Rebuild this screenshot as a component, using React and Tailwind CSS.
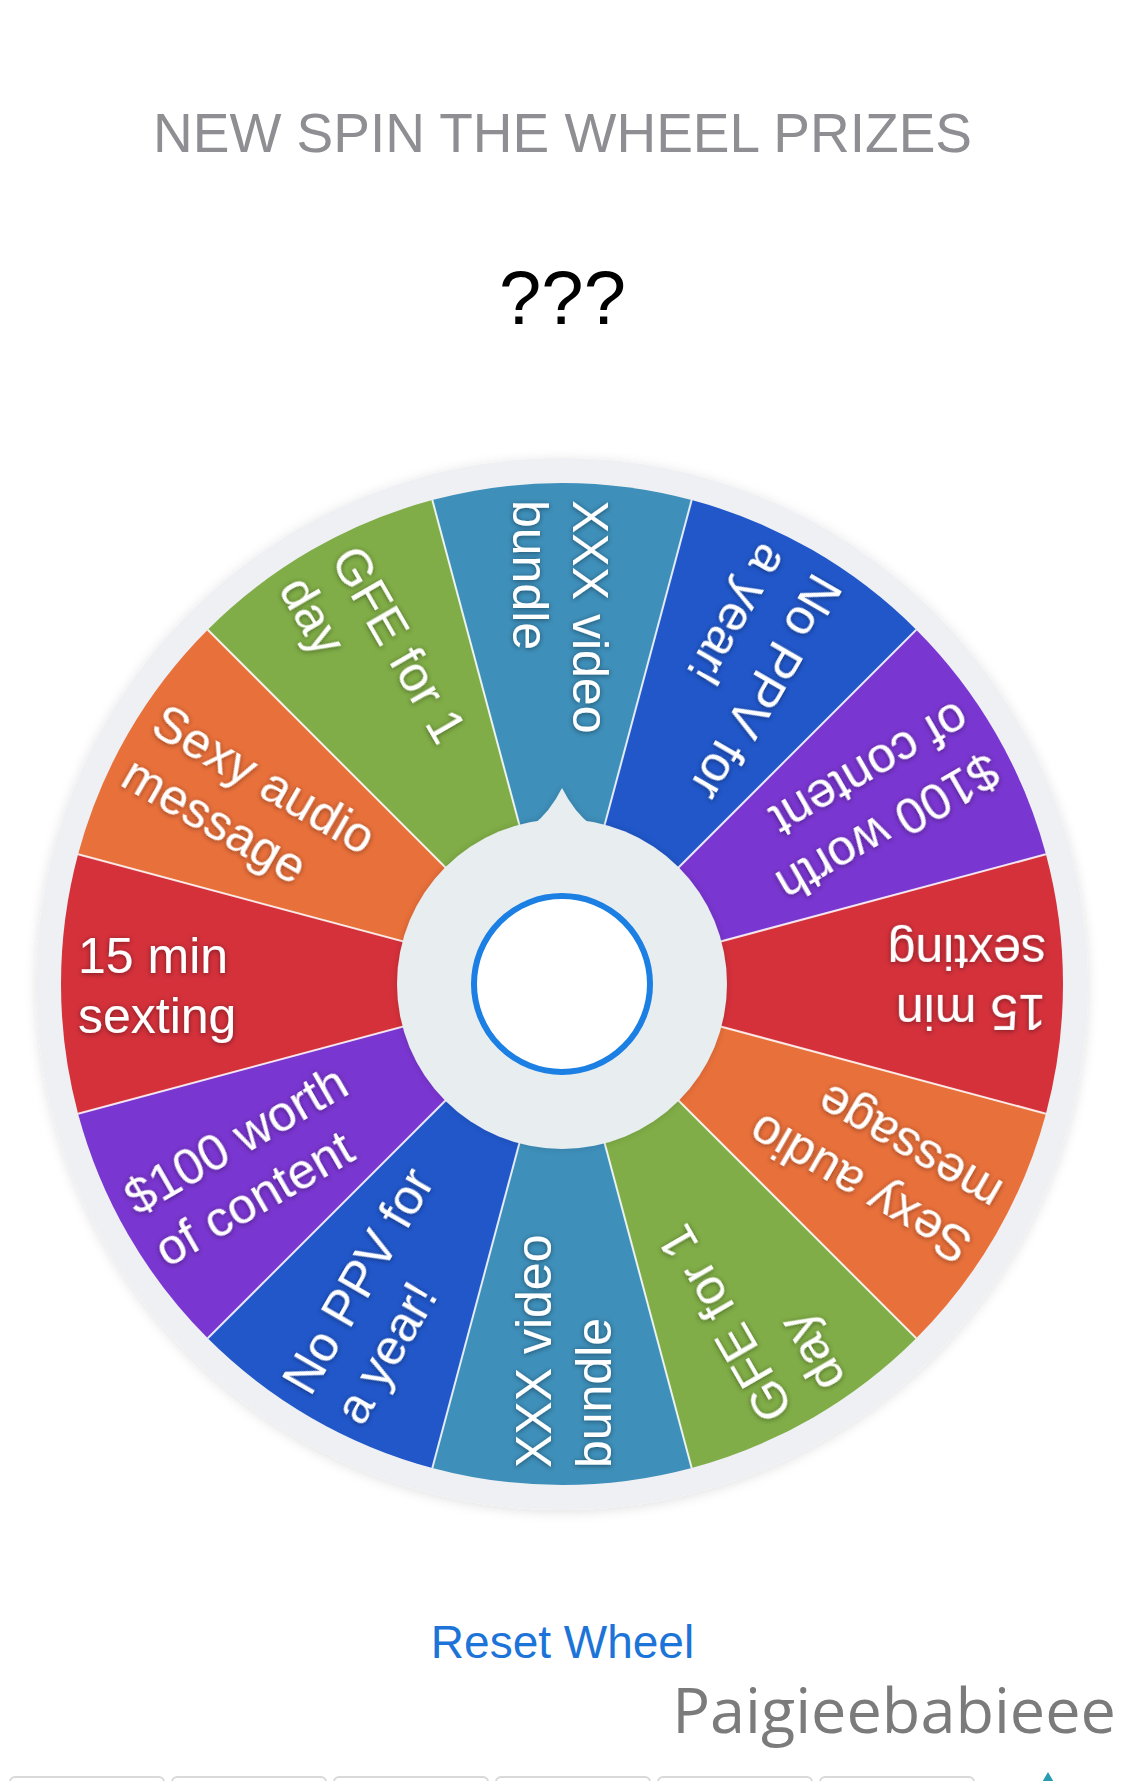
import React from "react";

const CX = 562;
const CY = 544;
const R = 501;
const RING = 526;

const SEGMENTS = [
  { color: "#3e8fba", l1: "XXX video", l2: "bundle" },
  { color: "#2157c9", l1: "No PPV for", l2: "a year!" },
  { color: "#7a36d0", l1: "$100 worth", l2: "of content" },
  { color: "#d4313b", l1: "15 min", l2: "sexting" },
  { color: "#e8703b", l1: "Sexy audio", l2: "message" },
  { color: "#80ad47", l1: "GFE for 1", l2: "day" },
];

function pt(angleDeg, r) {
  const a = (angleDeg * Math.PI) / 180;
  return [CX + r * Math.cos(a), CY + r * Math.sin(a)];
}

function Wheel() {
  const segs = [];
  for (let i = 0; i < 12; i++) {
    const s = SEGMENTS[i % 6];
    const mid = -90 + 30 * i;
    segs.push({ ...s, mid, a0: mid - 15, a1: mid + 15 });
  }
  return (
    <svg width="1125" height="1090" viewBox="0 0 1125 1090" className="block">
      <defs>
        <filter id="ringShadow" x="-10%" y="-10%" width="120%" height="120%">
          <feDropShadow dx="0" dy="2" stdDeviation="6" floodColor="#000" floodOpacity="0.12" />
        </filter>
        <filter id="textShadow" x="-10%" y="-10%" width="120%" height="120%">
          <feDropShadow dx="0" dy="1" stdDeviation="2.5" floodColor="#000" floodOpacity="0.45" />
        </filter>
        <filter id="hubShadow" x="-20%" y="-20%" width="140%" height="140%">
          <feDropShadow dx="0" dy="0" stdDeviation="3" floodColor="#000" floodOpacity="0.15" />
        </filter>
      </defs>
      <circle cx={CX} cy={CY} r={RING} fill="#eef0f3" filter="url(#ringShadow)" />
      {segs.map((s, i) => {
        const [x0, y0] = pt(s.a0, R);
        const [x1, y1] = pt(s.a1, R);
        return (
          <path
            key={"p" + i}
            d={`M ${CX} ${CY} L ${x0} ${y0} A ${R} ${R} 0 0 1 ${x1} ${y1} Z`}
            fill={s.color}
          />
        );
      })}
      {segs.map((s, i) => {
        const [x0, y0] = pt(s.a0, R);
        return (
          <line
            key={"l" + i}
            x1={CX}
            y1={CY}
            x2={x0}
            y2={y0}
            stroke="#ffffff"
            strokeOpacity="0.85"
            strokeWidth="2"
          />
        );
      })}
      <g filter="url(#textShadow)">
        {segs.map((s, i) => (
          <g key={"t" + i} transform={`translate(${CX} ${CY}) rotate(${s.mid + 180})`}>
            <text
              x={-484}
              y={-11}
              fill="#ffffff"
              fontSize="50"
              fontFamily="'Liberation Sans', Arial, sans-serif"
            >
              {s.l1}
            </text>
            <text
              x={-484}
              y={49}
              fill="#ffffff"
              fontSize="50"
              fontFamily="'Liberation Sans', Arial, sans-serif"
            >
              {s.l2}
            </text>
          </g>
        ))}
      </g>
      <g filter="url(#hubShadow)">
        <path
          d={`M ${CX - 30} ${CY - 158} Q ${CX - 12} ${CY - 172} ${CX} ${CY - 196} Q ${CX + 12} ${CY - 172} ${CX + 30} ${CY - 158} Z`}
          fill="#e8eef0"
        />
        <circle cx={CX} cy={CY} r="165" fill="#e8eef0" />
      </g>
      <circle cx={CX} cy={CY} r="88" fill="#ffffff" stroke="#1b7fe3" strokeWidth="6" />
    </svg>
  );
}

export default function App() {
  return (
    <div className="relative h-[1781px] w-[1125px] overflow-hidden bg-white">
      <div className="flex flex-col items-center pt-[106px]">
        <div
          className="h-[55px] text-[55px] leading-[55px] text-[#8e8e93] whitespace-nowrap"
          style={{ fontFamily: "'Liberation Sans', Arial, sans-serif" }}
        >
          NEW SPIN THE WHEEL PRIZES
        </div>
        <div
          className="mt-[99px] h-[76px] text-[76px] leading-[76px] text-black"
          style={{ fontFamily: "'Liberation Sans', Arial, sans-serif" }}
        >
          ???
        </div>
        <div className="mt-[104px]">
          <Wheel />
        </div>
        <div
          className="mt-[89px] h-[46px] text-[46px] leading-[46px] text-[#1d74d8] whitespace-nowrap"
          style={{ fontFamily: "'Liberation Sans', Arial, sans-serif" }}
        >
          Reset Wheel
        </div>
        <div
          className="mt-[12px] h-[63px] self-end pr-[9px] text-[63px] leading-[63px] text-[#7b7b7b] whitespace-nowrap"
          style={{ fontFamily: "'Open Sans', 'Noto Sans', sans-serif" }}
        >
          Paigieebabieee
        </div>
        <div className="mt-[36px] flex w-full items-start gap-[6px] pl-[9px]">
          {[0, 1, 2, 3, 4, 5].map((i) => (
            <div
              key={i}
              className="h-[30px] w-[156px] rounded-t-[6px] border-2 border-[#d9d9d9] bg-white"
            />
          ))}
          <div className="ml-[60px] mt-[-4px] h-0 w-0 border-x-[7px] border-b-[12px] border-x-transparent border-b-[#2a9bb0]" />
        </div>
      </div>
    </div>
  );
}
